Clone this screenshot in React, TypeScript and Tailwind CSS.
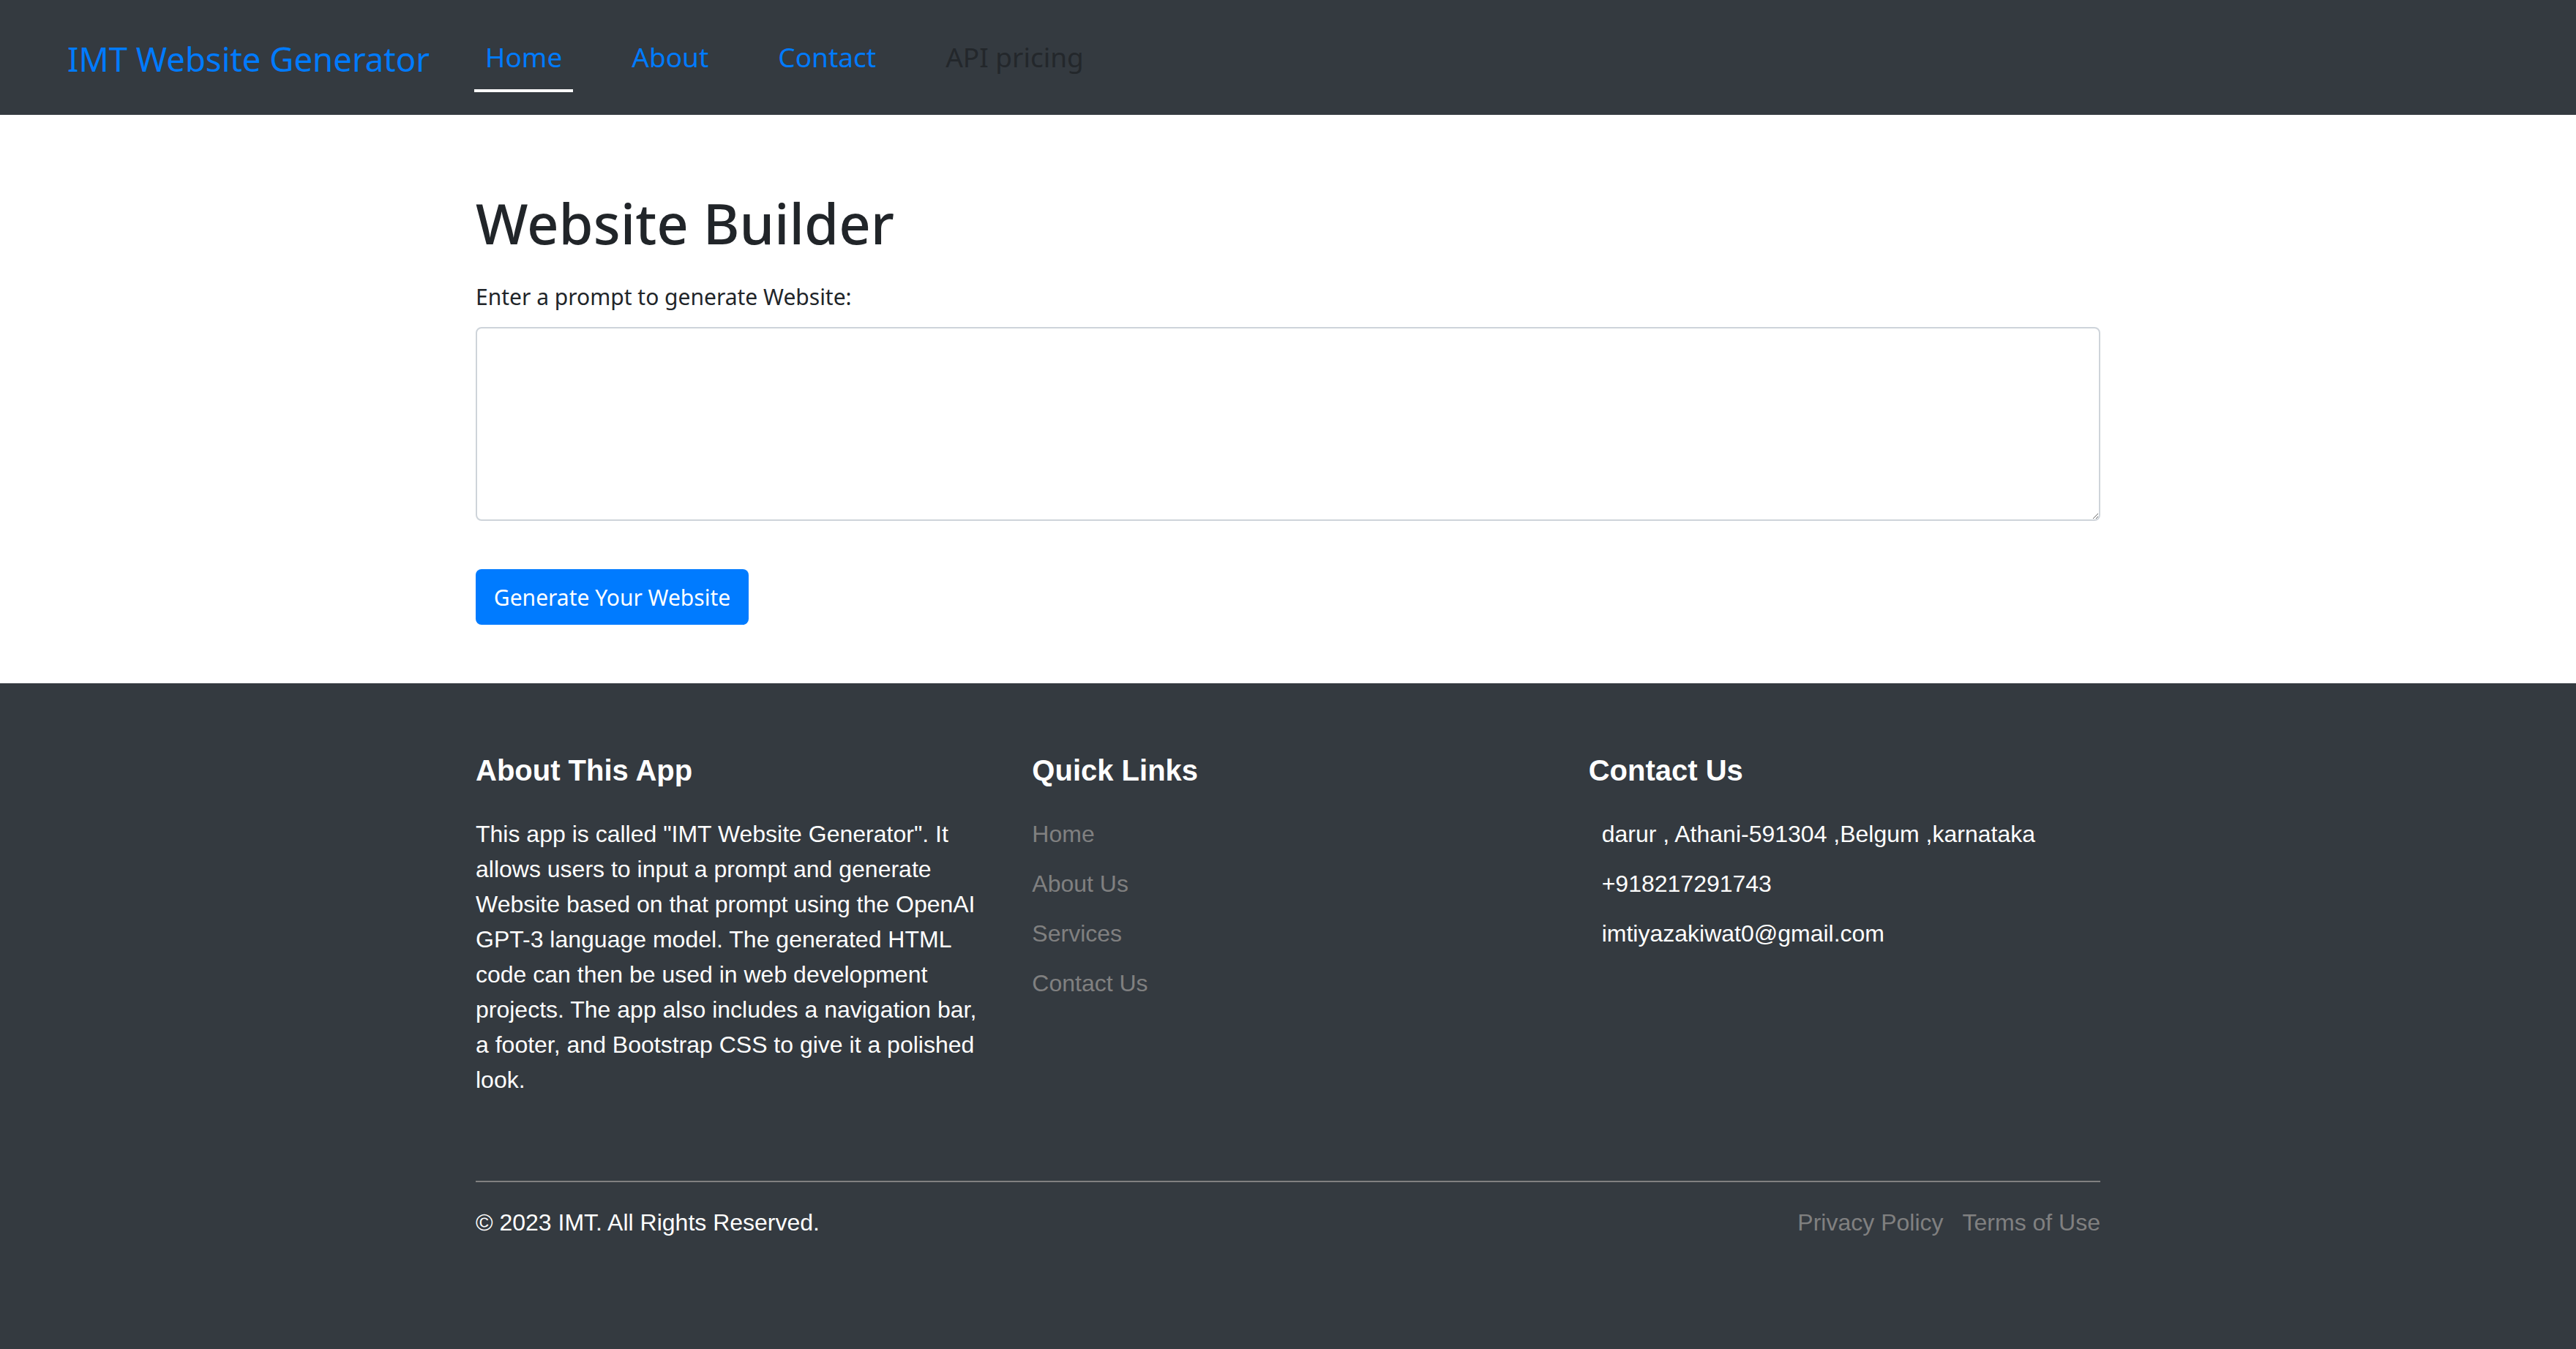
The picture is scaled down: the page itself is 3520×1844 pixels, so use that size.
import React from "react";

const SANS = { fontFamily: '"Noto Sans", "Open Sans", sans-serif' };
const ARIAL = { fontFamily: '"Liberation Sans", Arial, sans-serif' };

export default function App() {
  return (
    <div className="min-h-screen flex flex-col bg-white" style={SANS}>
      {/* Navbar */}
      <header className="h-[157px] bg-[#343a40] flex items-start pl-[92px]">
        <div className="w-[556px] mt-[53px] text-[45.5px] leading-[54px] text-[#007bff] whitespace-nowrap">
          IMT Website Generator
        </div>
        <nav className="flex items-start gap-[65px] mt-[51px] text-[37px] leading-[54px]">
          <a className="px-[15px] pb-[17px] border-b-4 border-white text-[#007bff]">Home</a>
          <a className="px-[15px] pb-[17px] text-[#007bff]">About</a>
          <a className="px-[15px] pb-[17px] text-[#007bff]">Contact</a>
          <a className="px-[15px] pb-[17px] text-[#23272b]">API pricing</a>
        </nav>
      </header>

      {/* Main */}
      <main className="w-[2220px] mx-auto pt-[100px] pb-[80px] text-[#212529]">
        <h1 className="text-[76px] leading-[96px] font-medium">Website Builder</h1>
        <label className="block mt-[30px] text-[30px] leading-[45px]">Enter a prompt to generate Website:</label>
        <textarea className="block mt-[19px] w-full h-[265px] border-2 border-[#ced4da] rounded-[8px] outline-none p-[12px] text-[30px]" />
        <button className="mt-[66px] h-[76px] w-[373px] bg-[#007bff] text-white text-[30px] leading-[45px] rounded-[8px] flex items-center justify-center">
          Generate Your Website
        </button>
      </main>

      {/* Footer */}
      <footer className="flex-1 bg-[#343a40] pt-[95px] pb-[120px]" style={ARIAL}>
        <div className="w-[2220px] mx-auto">
          <div className="grid grid-cols-3 gap-x-[61px]">
            <div>
              <h5 className="text-[40px] leading-[48px] font-bold text-white">About This App</h5>
              <p className="mt-[39px] text-[32px] leading-[48px] text-white">
                This app is called "IMT Website Generator". It allows users to input a prompt and generate Website based on that prompt using the OpenAI GPT-3 language model. The generated HTML code can then be used in web development projects. The app also includes a navigation bar, a footer, and Bootstrap CSS to give it a polished look.
              </p>
            </div>
            <div>
              <h5 className="text-[40px] leading-[48px] font-bold text-white">Quick Links</h5>
              <ul className="mt-[39px] flex flex-col gap-[20px] text-[32px] leading-[48px] text-[#808080]">
                <li>Home</li>
                <li>About Us</li>
                <li>Services</li>
                <li>Contact Us</li>
              </ul>
            </div>
            <div>
              <h5 className="text-[40px] leading-[48px] font-bold text-white">Contact Us</h5>
              <ul className="mt-[39px] pl-[18px] flex flex-col gap-[20px] text-[32px] leading-[48px] text-white">
                <li>darur , Athani-591304 ,Belgum ,karnataka</li>
                <li>+918217291743</li>
                <li>imtiyazakiwat0@gmail.com</li>
              </ul>
            </div>
          </div>
          <div className="mt-[114px] h-[2px] bg-[#808080]" />
          <div className="mt-[31px] flex justify-between text-[32px] leading-[48px]">
            <span className="text-white">© 2023 IMT. All Rights Reserved.</span>
            <div className="flex gap-[26px] text-[#808080]">
              <span>Privacy Policy</span>
              <span>Terms of Use</span>
            </div>
          </div>
        </div>
      </footer>
    </div>
  );
}
